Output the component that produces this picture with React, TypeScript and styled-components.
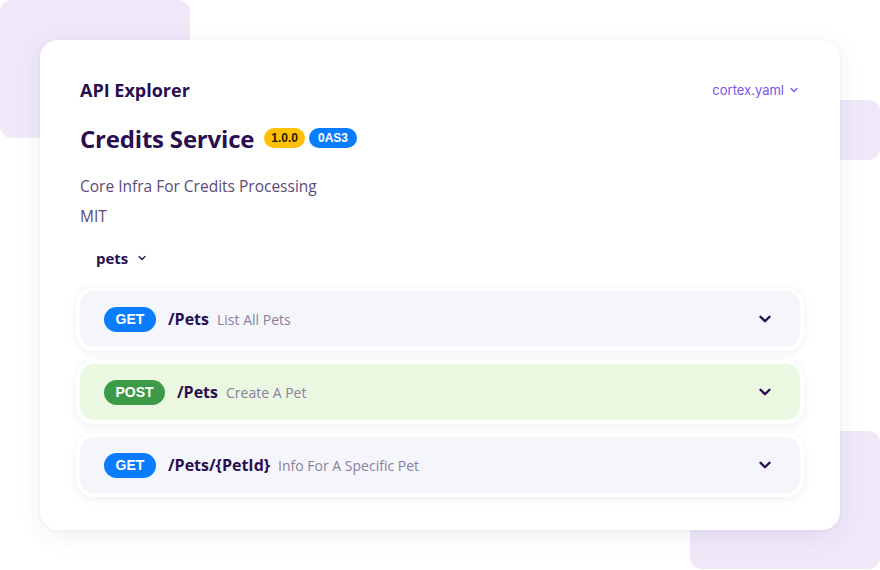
import React from "react";
import styled, { createGlobalStyle } from "styled-components";

const Global = createGlobalStyle`
  html, body { margin: 0; padding: 0; background: #ffffff; }
  body { width: 880px; height: 570px; overflow: hidden; font-family: "Open Sans", "Noto Sans", sans-serif; }
  * { box-sizing: border-box; }
`;

const Stage = styled.div`
  position: relative;
  width: 880px;
  height: 570px;
  padding: 40px;
`;

const Deco = styled.div<{ $x: number; $y: number; $w: number; $h: number }>`
  position: absolute;
  left: ${(p) => p.$x}px;
  top: ${(p) => p.$y}px;
  width: ${(p) => p.$w}px;
  height: ${(p) => p.$h}px;
  background: #efe8f9;
  border-radius: 12px;
`;

const Card = styled.div`
  position: relative;
  width: 800px;
  height: 490px;
  background: #ffffff;
  border-radius: 18px;
  box-shadow: 0 6px 24px rgba(60, 40, 100, 0.07), 0 1px 4px rgba(60, 40, 100, 0.04);
  padding: 34px 36px 0 36px;
  display: flex;
  flex-direction: column;
`;

const TopBar = styled.div`
  display: flex;
  justify-content: space-between;
  align-items: center;
  padding: 0 4px;
  height: 32px;
`;

const Heading = styled.h1`
  margin: 0;
  font-size: 18px;
  font-weight: 700;
  color: #2a0f50;
`;

const FileSelect = styled.div`
  display: flex;
  align-items: center;
  gap: 4px;
  font-family: Inter, "Liberation Sans", sans-serif;
  font-size: 13px;
  color: #7a55e8;
  padding-right: 0;
`;

const TitleRow = styled.div`
  display: flex;
  align-items: center;
  gap: 4px;
  padding: 0 4px;
  margin-top: 15px;
  height: 34px;
`;

const Title = styled.h2`
  margin: 0 6px 0 0;
  font-size: 24px;
  font-weight: 700;
  color: #2a0f50;
  letter-spacing: -0.2px;
`;

const Badge = styled.span<{ $bg: string; $fg: string; $pad: number }>`
  display: inline-flex;
  align-items: center;
  height: 20px;
  padding: 0 ${(p) => p.$pad}px;
  border-radius: 10px;
  background: ${(p) => p.$bg};
  color: ${(p) => p.$fg};
  font-family: "Liberation Sans", Arial, sans-serif;
  font-weight: 700;
  font-size: 12px;
`;

const Info = styled.p`
  margin: 0;
  padding: 0 4px;
  font-size: 15.5px;
  color: #5a4a78;
  line-height: 30px;
`;

const InfoBlock = styled.div`
  margin-top: 16px;
`;

const Tag = styled.div`
  display: flex;
  align-items: center;
  gap: 8px;
  margin: 12px 0 0 20px;
  height: 30px;
  font-size: 15px;
  font-weight: 700;
  color: #2a0f50;
`;

const List = styled.div`
  display: flex;
  flex-direction: column;
  gap: 9px;
  margin-top: 14px;
`;

const Row = styled.div<{ $bg: string }>`
  display: flex;
  align-items: center;
  height: 64px;
  border: 4px solid #ffffff;
  border-radius: 18px;
  background: ${(p) => p.$bg};
  box-shadow: 0 2px 8px rgba(60, 40, 100, 0.08);
  padding: 0 26px 0 24px;
`;

const Method = styled.span<{ $bg: string; $w: number }>`
  display: inline-flex;
  align-items: center;
  justify-content: center;
  width: ${(p) => p.$w}px;
  height: 25px;
  border-radius: 13px;
  background: ${(p) => p.$bg};
  color: #ffffff;
  font-family: "Liberation Sans", Arial, sans-serif;
  font-weight: 700;
  font-size: 14px;
  margin-right: 12px;
`;

const Path = styled.span`
  font-size: 16px;
  font-weight: 700;
  color: #2a0f50;
  margin-right: 8px;
`;

const Desc = styled.span`
  font-size: 14px;
  color: #8a7f9e;
  flex: 1;
`;

const Chevron = ({ size, stroke, color }: { size: number; stroke: number; color: string }) => (
  <svg width={size} height={size} viewBox="0 0 24 24" fill="none" stroke={color} strokeWidth={stroke} strokeLinecap="round" strokeLinejoin="round">
    <path d="M6 9l6 6 6-6" />
  </svg>
);

const ops = [
  { m: "GET", bg: "#f5f5fc", mbg: "#0a7cff", w: 52, path: "/Pets", desc: "List All Pets" },
  { m: "POST", bg: "#ebf8e1", mbg: "#3d9a48", w: 61, path: "/Pets", desc: "Create A Pet" },
  { m: "GET", bg: "#f5f5fc", mbg: "#0a7cff", w: 52, path: "/Pets/{PetId}", desc: "Info For A Specific Pet" },
];

export default function App() {
  return (
    <>
      <Global />
      <Stage>
        <Deco $x={0} $y={0} $w={190} $h={138} />
        <Deco $x={800} $y={100} $w={80} $h={60} />
        <Deco $x={690} $y={431} $w={190} $h={138} />
        <Card>
          <TopBar>
            <Heading>API Explorer</Heading>
            <FileSelect>
              cortex.yaml
              <Chevron size={12} stroke={2.6} color="#7a55e8" />
            </FileSelect>
          </TopBar>
          <TitleRow>
            <Title>Credits Service</Title>
            <Badge $bg="#ffc107" $fg="#2a1a00" $pad={7}>1.0.0</Badge>
            <Badge $bg="#0a7cff" $fg="#ffffff" $pad={9}>0AS3</Badge>
          </TitleRow>
          <InfoBlock>
            <Info>Core Infra For Credits Processing</Info>
            <Info>MIT</Info>
          </InfoBlock>
          <Tag>
            pets
            <Chevron size={12} stroke={2.5} color="#2a0f50" />
          </Tag>
          <List>
            {ops.map((o, i) => (
              <Row key={i} $bg={o.bg}>
                <Method $bg={o.mbg} $w={o.w}>{o.m}</Method>
                <Path>{o.path}</Path>
                <Desc>{o.desc}</Desc>
                <Chevron size={18} stroke={3.2} color="#2a0f50" />
              </Row>
            ))}
          </List>
        </Card>
      </Stage>
    </>
  );
}
